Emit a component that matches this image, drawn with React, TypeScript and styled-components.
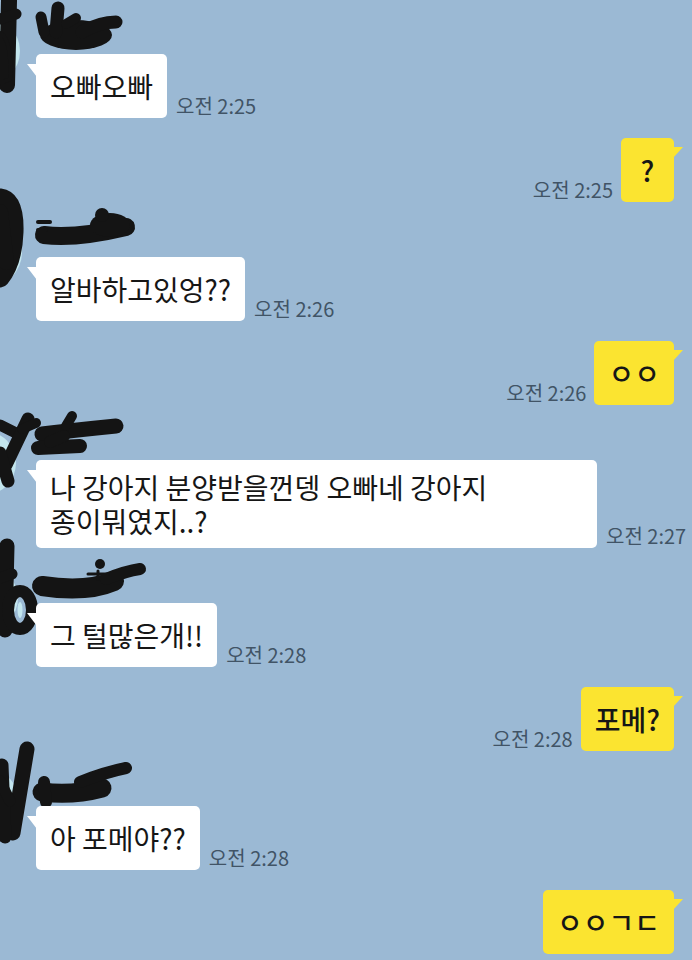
import React from "react";
import styled, { createGlobalStyle } from "styled-components";

type Message = {
	mine: boolean;
	text: string;
	time?: string;
	mark?: number;
};

const messages: Message[] = [
	{ mine: false, text: "오빠오빠", time: "오전 2:25", mark: 0 },
	{ mine: true, text: "?", time: "오전 2:25" },
	{ mine: false, text: "알바하고있엉??", time: "오전 2:26", mark: 1 },
	{ mine: true, text: "ㅇㅇ", time: "오전 2:26" },
	{
		mine: false,
		text: "나 강아지 분양받을껀뎅 오빠네 강아지 종이뭐였지..?",
		time: "오전 2:27",
		mark: 2,
	},
	{ mine: false, text: "그 털많은개!!", time: "오전 2:28", mark: 3 },
	{ mine: true, text: "포메?", time: "오전 2:28" },
	{ mine: false, text: "아 포메야??", time: "오전 2:28", mark: 4 },
	{ mine: true, text: "ㅇㅇㄱㄷ" },
];

const INK = "#141414";
const RING = "#c3e6ee";

// scribbled-over profile pictures, one per incoming message
const Avatar: React.FC<{ variant: number }> = ({ variant }) => (
	<AvatarSvg viewBox="0 0 36 110">
		{variant === 0 && (
			<g stroke={INK} strokeLinecap="round" fill="none">
				<circle cx={-14} cy={62} r={34} fill={RING} stroke="none" />
				<path d="M9 12 L7 96" strokeWidth={16} />
				<path d="M0 30 L16 25" strokeWidth={11} />
				<path d="M0 44 Q12 50 10 90 L0 94 Z" fill={INK} strokeWidth={4} />
			</g>
		)}
		{variant === 1 && (
			<g stroke={INK} strokeLinecap="round" fill="none">
				<circle cx={-14} cy={60} r={36} fill={RING} stroke="none" />
				<path d="M0 6 Q15 8 14 40 Q13 70 0 86" strokeWidth={19} />
				<path d="M0 20 L6 70" strokeWidth={16} />
			</g>
		)}
		{variant === 2 && (
			<g stroke={INK} strokeLinecap="round" fill="none">
				<circle cx={-16} cy={68} r={32} fill={RING} stroke="none" />
				<path d="M0 30 L20 40" strokeWidth={11} />
				<path d="M28 24 L6 70" strokeWidth={13} />
				<path d="M0 58 L8 86" strokeWidth={13} />
				<path d="M22 34 L36 28" strokeWidth={10} />
			</g>
		)}
		{variant === 3 && (
			<g stroke={INK} strokeLinecap="round" fill="none">
				<circle cx={-14} cy={60} r={32} fill={RING} stroke="none" />
				<path d="M7 8 L5 92" strokeWidth={15} />
				<ellipse cx={20} cy={72} rx={12} ry={19} strokeWidth={12} />
				<ellipse cx={20} cy={72} rx={2.5} ry={8} fill={RING} stroke="none" />
				<path d="M0 40 L12 36" strokeWidth={11} />
			</g>
		)}
		{variant === 4 && (
			<g stroke={INK} strokeLinecap="round" fill="none">
				<circle cx={-14} cy={62} r={34} fill={RING} stroke="none" />
				<path d="M27 8 L13 92" strokeWidth={15} />
				<path d="M2 24 L5 96" strokeWidth={13} />
				<path d="M0 40 L10 60" strokeWidth={11} />
			</g>
		)}
	</AvatarSvg>
);

// the blacked-out sender names
const NameMark: React.FC<{ variant: number }> = ({ variant }) => (
	<NameSvg viewBox="0 0 140 52">
		<g stroke={INK} fill={INK} strokeLinecap="round" strokeLinejoin="round">
			{variant === 0 && (
				<>
					<ellipse cx={40} cy={33} rx={36} ry={15} stroke="none" />
					<path d="M20 30 L22 6" strokeWidth={13} fill="none" />
					<path d="M46 30 Q64 20 80 20" strokeWidth={13} fill="none" />
					<path d="M8 30 L5 15" strokeWidth={11} fill="none" />
					<path d="M30 22 L40 16" strokeWidth={10} fill="none" />
				</>
			)}
			{variant === 1 && (
				<>
					<path d="M8 30 Q40 34 90 22" strokeWidth={18} fill="none" />
					<ellipse cx={74} cy={20} rx={20} ry={12} stroke="none" />
					<circle cx={66} cy={10} r={7} stroke="none" />
					<path d="M2 17 L14 17" strokeWidth={4} fill="none" />
					<path d="M2 25 L10 25" strokeWidth={4} fill="none" />
				</>
			)}
			{variant === 2 && (
				<>
					<path d="M6 26 Q40 22 80 18" strokeWidth={15} fill="none" />
					<path d="M2 40 L44 38" strokeWidth={14} fill="none" />
					<path d="M30 18 L36 8" strokeWidth={10} fill="none" />
					<path d="M14 34 L28 28" strokeWidth={12} fill="none" />
				</>
			)}
			{variant === 3 && (
				<>
					<path d="M6 35 Q50 42 78 30" strokeWidth={20} fill="none" />
					<path d="M70 28 Q90 20 104 18" strokeWidth={12} fill="none" />
					<circle cx={64} cy={13} r={5} stroke="none" />
					<path d="M52 23 L72 23" strokeWidth={3} fill="none" />
					<path d="M62 20 L62 28" strokeWidth={3} fill="none" />
				</>
			)}
			{variant === 4 && (
				<>
					<path d="M6 38 Q36 42 66 34" strokeWidth={19} fill="none" />
					<path d="M44 28 Q70 18 90 14" strokeWidth={12} fill="none" />
					<path d="M8 28 L10 48" strokeWidth={12} fill="none" />
				</>
			)}
		</g>
	</NameSvg>
);

const App: React.FC = () => {
	return (
		<>
			<GlobalStyle />
			<Screen>
				{messages.map((m, i) =>
					m.mine ? (
						<Outgoing key={i}>
							{m.time && <Time>{m.time}</Time>}
							<Bubble $mine>{m.text}</Bubble>
						</Outgoing>
					) : (
						<Incoming key={i}>
							<Avatar variant={m.mark ?? 0} />
							<Column>
								<NameMark variant={m.mark ?? 0} />
								<BubbleRow>
									<Bubble>{m.text}</Bubble>
									{m.time && <Time>{m.time}</Time>}
								</BubbleRow>
							</Column>
						</Incoming>
					)
				)}
			</Screen>
		</>
	);
};

export default App;

const GlobalStyle = createGlobalStyle`
	html, body {
		margin: 0;
		padding: 0;
		background: #9bb9d4;
	}
	body {
		font-family: "Noto Sans CJK KR", "Noto Sans", sans-serif;
	}
`;

const Screen = styled.div`
	width: 692px;
	height: 960px;
	box-sizing: border-box;
	overflow: hidden;
	background: #9bb9d4;
	padding-top: 19px;
	display: flex;
	flex-direction: column;
	gap: 20px;
`;

const Incoming = styled.div`
	display: flex;
	align-items: flex-start;
`;

const AvatarSvg = styled.svg`
	display: block;
	flex-shrink: 0;
	width: 36px;
	height: 110px;
	margin-top: -30px;
	overflow: visible;
`;

const Column = styled.div`
	display: flex;
	flex-direction: column;
	align-items: flex-start;
`;

const NameSvg = styled.svg`
	display: block;
	width: 140px;
	height: 52px;
	margin-top: -17px;
	overflow: visible;
`;

const BubbleRow = styled.div`
	display: flex;
	align-items: flex-end;
	gap: 9px;
`;

const Outgoing = styled.div`
	display: flex;
	justify-content: flex-end;
	align-items: flex-end;
	gap: 8px;
	padding-right: 18px;
`;

const Bubble = styled.div<{ $mine?: boolean }>`
	position: relative;
	box-sizing: border-box;
	max-width: 561px;
	min-width: 53px;
	min-height: 64px;
	padding: 10px 14px;
	display: flex;
	align-items: center;
	justify-content: center;
	border-radius: 5px;
	background: ${(p) => (p.$mine ? "#fbe430" : "#ffffff")};
	color: #161616;
	font-size: 28px;
	line-height: 34px;
	font-weight: ${(p) => (p.$mine ? 500 : 400)};
	word-break: keep-all;

	&::before {
		content: "";
		position: absolute;
		top: ${(p) => (p.$mine ? "9px" : "10px")};
		${(p) => (p.$mine ? "right: -9px;" : "left: -9px;")}
		width: 10px;
		height: ${(p) => (p.$mine ? "11px" : "13px")};
		background: inherit;
		clip-path: ${(p) =>
			p.$mine
				? "polygon(0 0, 100% 0, 0 100%)"
				: "polygon(0 0, 100% 0, 100% 100%)"};
	}
`;

const Time = styled.span`
	flex-shrink: 0;
	white-space: nowrap;
	font-size: 20px;
	line-height: 22px;
	margin-bottom: 1px;
	color: #415466;
`;
